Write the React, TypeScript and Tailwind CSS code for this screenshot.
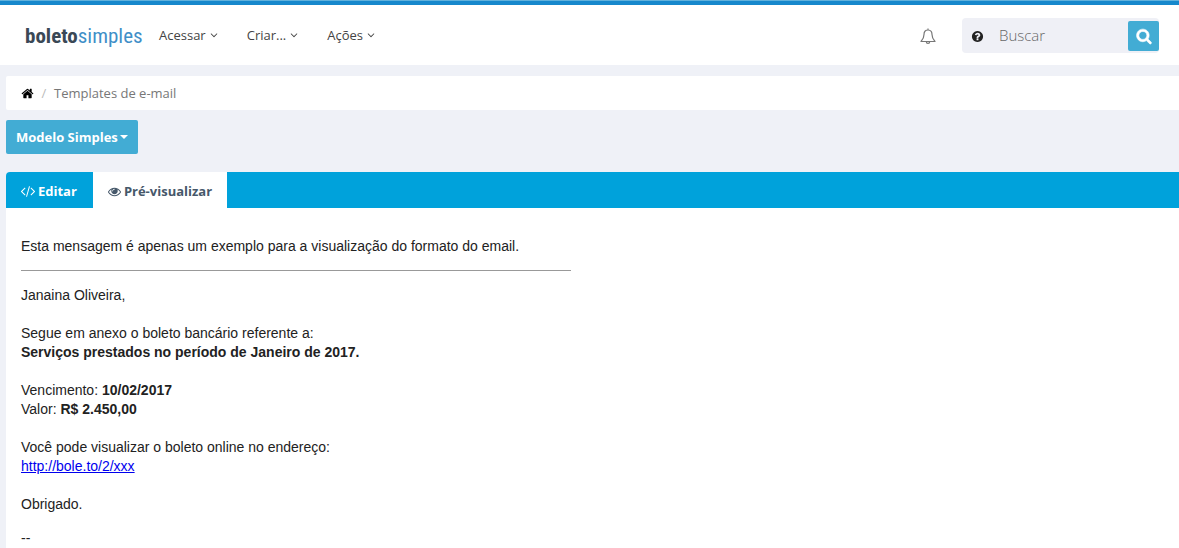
import type { ReactNode } from "react";

const icons = {
  home: "M1472 992v480q0 26-19 45t-45 19h-384v-384h-256v384h-384q-26 0-45-19t-19-45v-480q0-1 .5-3t.5-3l575-474 575 474q1 2 1 6zm223-69l-62 74q-8 9-21 11h-3q-13 0-21-7l-692-577-692 577q-12 8-24 7-13-2-21-11l-62-74q-8-10-7-23.5t11-21.5l719-599q32-26 76-26t76 26l244 204v-195q0-14 9-23t23-9h192q14 0 23 9t9 23v408l219 182q10 8 11 21.5t-7 23.5z",
  code: "M553 1399l-50 50q-10 10-23 10t-23-10l-466-466q-10-10-10-23t10-23l466-466q10-10 23-10t23 10l50 50q10 10 10 23t-10 23l-393 393 393 393q10 10 10 23t-10 23zm591-1067l-373 1291q-4 13-15.5 19.5t-23.5 2.5l-62-17q-13-4-19.5-15.5t-2.5-24.5l373-1291q4-13 15.5-19.5t23.5-2.5l62 17q13 4 19.5 15.5t2.5 24.5zm657 651l-466 466q-10 10-23 10t-23-10l-50-50q-10-10-10-23t10-23l393-393-393-393q-10-10-10-23t10-23l50-50q10-10 23-10t23 10l466 466q10 10 10 23t-10 23z",
  eye: "M1664 960q-152-236-381-353 61 104 61 225 0 185-131.5 316.5t-316.5 131.5-316.5-131.5-131.5-316.5q0-121 61-225-229 117-381 353 133 205 333.5 326.5t434.5 121.5 434.5-121.5 333.5-326.5zm-720-384q0-20-14-34t-34-14q-125 0-214.5 89.5t-89.5 214.5q0 20 14 34t34 14 34-14 14-34q0-86 61-147t147-61q20 0 34-14t14-34zm848 384q0 34-20 69-140 230-376.5 368.5t-499.5 138.5-499.5-139-376.5-368q-20-35-20-69t20-69q140-229 376.5-368t499.5-139 499.5 139 376.5 368q20 35 20 69z",
  search: "M1216 832q0-185-131.5-316.5t-316.5-131.5-316.5 131.5-131.5 316.5 131.5 316.5 316.5 131.5 316.5-131.5 131.5-316.5zm512 832q0 52-38 90t-90 38q-54 0-90-38l-343-342q-179 124-399 124-143 0-273.5-55.5t-225-150-150-225-55.5-273.5 55.5-273.5 150-225 225-150 273.5-55.5 273.5 55.5 225 150 150 225 55.5 273.5q0 220-124 399l343 343q37 37 37 90z",
  question:
    "M1024 1376v-192q0-14-9-23t-23-9h-192q-14 0-23 9t-9 23v192q0 14 9 23t23 9h192q14 0 23-9t9-23zm256-672q0-88-55.5-163t-138.5-116-170-41q-243 0-371 213-15 24 8 42l132 100q7 6 19 6 16 0 25-12 53-68 86-92 34-24 86-24 48 0 85.5 26t37.5 59q0 38-20 61t-68 45q-63 28-115.5 86.5t-52.5 125.5v36q0 14 9 23t23 9h192q14 0 23-9t9-23q0-19 21.5-49.5t54.5-49.5q32-18 49-28.5t46-35 44.5-48 28-60.5 12.5-81zm384 192q0 209-103 385.5t-279.5 279.5-385.5 103-385.5-103-279.5-279.5-103-385.5 103-385.5 279.5-279.5 385.5-103 385.5 103 279.5 279.5 103 385.5z",
  angleDown:
    "M1395 736q0 13-10 23l-466 466q-10 10-23 10t-23-10l-466-466q-10-10-10-23t10-23l50-50q10-10 23-10t23 10l393 393 393-393q10-10 23-10t23 10l50 50q10 10 10 23z",
};

function Icon({ name, className }: { name: keyof typeof icons; className: string }) {
  return (
    <svg viewBox="0 0 1792 1792" fill="currentColor" aria-hidden="true" className={className}>
      <path d={icons[name]} />
    </svg>
  );
}

function MenuButton({ children }: { children: ReactNode }) {
  return (
    <button type="button" aria-haspopup="menu" className="flex items-center gap-0.5 pb-px text-[#444]">
      {children}
      <Icon name="angleDown" className="size-3" />
    </button>
  );
}

export default function App() {
  return (
    <div className="min-h-screen border-t border-[#62b2dc] bg-[#eff1f7] font-['Open_Sans',sans-serif] text-[13px] leading-5">
      <header className="flex h-16 items-center border-t-4 border-[#1788cc] bg-white pt-px pr-5 pl-[25px]">
        <a
          href="#inicio"
          className="w-[134px] font-['Roboto_Condensed',Roboto,sans-serif] text-[21px] leading-6 text-[#3f8fc8]"
        >
          <span className="font-bold text-[#3a4856]">boleto</span>simples
        </a>
        <nav className="flex gap-[27px]">
          <MenuButton>Acessar</MenuButton>
          <MenuButton>Criar...</MenuButton>
          <MenuButton>Ações</MenuButton>
        </nav>
        <button type="button" aria-label="Notificações" className="ml-auto text-[#777]">
          <svg viewBox="0 0 16 16" fill="none" stroke="currentColor" strokeWidth="1.200" strokeLinejoin="round" className="size-4">
            <path d="M8 2C5 2 4 4.200 4 6.500C4 9.500 3.500 11 1 13.500H15C12.500 11 12 9.500 12 6.500C12 4.200 11 2 8 2ZM8 .5V2M6.300 13.700C6.300 15.900 9.700 15.900 9.700 13.700" />
          </svg>
        </button>
        <form role="search" className="ml-[26px] flex h-[35px] items-center rounded-sm bg-[#eff0f6] pt-px pl-[9px]" onSubmit={(e) => e.preventDefault()}>
          <button type="button" aria-label="Ajuda" className="text-[#222]">
            <Icon name="question" className="size-[13px]" />
          </button>
          <input
            type="text"
            aria-label="Buscar"
            placeholder="Buscar"
            className="ml-[15px] h-[34px] w-[129px] bg-transparent pb-0.5 text-[15px] font-light text-[#555] outline-none placeholder:text-[#666]"
          />
          <button type="submit" aria-label="Pesquisar" className="flex h-[30px] w-[31px] items-center justify-center rounded-xs bg-[#42acd4] text-white">
            <Icon name="search" className="size-4 overflow-visible stroke-current stroke-[70]" />
          </button>
        </form>
      </header>

      <main className="pt-[11px] pl-[6px]">
        <nav aria-label="Trilha" className="flex h-[34px] items-center rounded-l-xs bg-white pl-[15px]">
          <a href="#inicio" aria-label="Início" className="text-black">
            <Icon name="home" className="size-[13px]" />
          </a>
          <span className="w-5 text-center text-[#bbb]">/</span>
          <span className="text-[#777]">Templates de e-mail</span>
        </nav>

        <button
          type="button"
          aria-haspopup="menu"
          className="mt-[10px] flex h-[34px] items-center gap-0.5 rounded-xs bg-[#42acd4] px-[10px] font-bold text-white"
        >
          Modelo Simples
          <svg viewBox="0 0 8 4" fill="currentColor" aria-hidden="true" className="h-1 w-2">
            <path d="M0 0H8L4 4Z" />
          </svg>
        </button>

        <section className="mt-[18px] rounded-tl-sm bg-white">
          <div role="tablist" className="flex h-9 rounded-tl-sm bg-[#00a2db] font-bold">
            <button type="button" role="tab" aria-selected="false" className="flex items-center gap-[3px] pt-0.5 pr-4 pl-[15px] text-white">
              <Icon name="code" className="size-[14px]" />
              Editar
            </button>
            <button type="button" role="tab" aria-selected="true" className="flex items-center gap-[3px] bg-white px-[15px] pt-0.5 text-[#46586a]">
              <Icon name="eye" className="size-[13px]" />
              Pré-visualizar
            </button>
          </div>

          <div role="tabpanel" className="px-[15px] pt-[29px] font-['Liberation_Sans',Arial,sans-serif] text-sm leading-[19px] text-[#222]">
            <p>Esta mensagem é apenas um exemplo para a visualização do formato do email.</p>
            <hr className="mt-[14px] mb-[15px] max-w-[550px] border-t-[#999]" />
            <p>Janaina Oliveira,</p>
            <p className="mt-[19px]">
              Segue em anexo o boleto bancário referente a:
              <br />
              <b>Serviços prestados no período de Janeiro de 2017.</b>
            </p>
            <p className="mt-[19px]">
              Vencimento: <b>10/02/2017</b>
              <br />
              Valor: <b>R$ 2.450,00</b>
            </p>
            <p className="mt-[19px]">
              Você pode visualizar o boleto online no endereço:
              <br />
              <a href="http://bole.to/2/xxx" className="text-[#0000ee] underline">
                http://bole.to/2/xxx
              </a>
            </p>
            <p className="mt-[19px]">Obrigado.</p>
            <p className="mt-[15px]">--</p>
          </div>
        </section>
      </main>
    </div>
  );
}
